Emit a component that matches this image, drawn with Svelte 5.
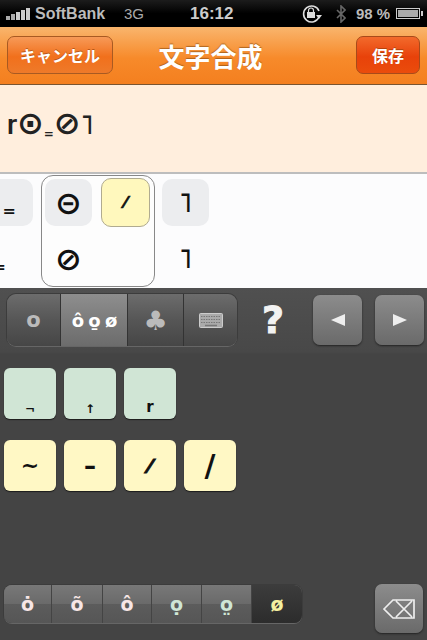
<script lang="ts">
  const bars = [4, 6, 8, 10, 12];
  const tabs = [
    { label: 'o', w: 54, size: 21 },
    { label: 'ô o̱ ø', w: 67, size: 18, active: true },
    { label: '♣', w: 56, size: 27 },
  ];
  const greenKeys = [
    { label: '¬', size: 12 },
    { label: '↑', size: 12 },
    { label: 'r', size: 15 },
  ];
  const yellowKeys = [
    { label: '~', size: 22 },
    { label: '–', size: 24 },
    { label: '⁄', size: 20, slant: true },
    { label: '/', size: 30 },
  ];
  const faces = [
    { label: 'ȯ', w: 48, c: 'pink' },
    { label: 'õ', w: 51, c: 'pink' },
    { label: 'ô', w: 49, c: 'pink' },
    { label: 'ọ', w: 50, c: 'mint' },
    { label: 'o̤', w: 50, c: 'mint' },
    { label: 'ø', w: 50, c: 'lemon', active: true },
  ];
</script>

<div class="screen">
  <div class="status">
    <div class="signal">
      {#each bars as h, i}
        <i class:dim={i < 2} style="height: {h}px"></i>
      {/each}
    </div>
    <span class="carrier">SoftBank</span>
    <span class="net">3G</span>
    <span class="clock">16:12</span>
    <svg class="lock" width="22" height="20" viewBox="0 0 22 20">
      <path d="M18 13a8 8 0 1 1 0-6" fill="none" stroke="#ddd" stroke-width="1.6" />
      <path d="M15 11h6l-3 4z" fill="#ddd" />
      <rect x="6" y="8" width="8" height="6" fill="#ddd" />
      <path d="M7.5 8V6.5a2.5 2.5 0 0 1 5 0V8" fill="none" stroke="#ddd" stroke-width="1.2" />
    </svg>
    <svg class="bt" width="10" height="18" viewBox="0 0 10 18">
      <path d="M1 5l8 8-4 4V1l4 4-8 8" fill="none" stroke="#666" stroke-width="1.6" />
    </svg>
    <span class="pct">98 %</span>
    <div class="battery"><b></b></div>
  </div>

  <div class="nav">
    <button class="btn cancel">キャンセル</button>
    <span class="title">文字合成</span>
    <button class="btn save">保存</button>
  </div>

  <div class="preview">
    <p><span class="p-r">ɼ</span><span class="p-o">⊙</span><span class="p-m">=</span><span class="p-o">⊘</span><span class="p-e">˥</span></p>
  </div>

  <div class="cands">
    <div class="col edge">
      <div class="cell gray low">=</div>
      <div class="cell low clipped">=</div>
    </div>
    <div class="popover">
      <div class="cell gray">⊝</div>
      <div class="cell picked">⁄</div>
      <div class="cell">⊘</div>
      <div class="cell"></div>
    </div>
    <div class="col">
      <div class="cell gray one">˥</div>
      <div class="cell one">˥</div>
    </div>
  </div>

  <div class="panel">
    <div class="toolbar">
      <div class="seg">
        {#each tabs as t}
          <div class="tab" class:active={t.active} style="width: {t.w}px; font-size: {t.size}px">{t.label}</div>
        {/each}
        <div class="tab" style="width: 53px">
          <svg width="24" height="15" viewBox="0 0 24 15">
            <rect x="0.5" y="0.5" width="23" height="14" rx="1" fill="#aaa" stroke="#ccc" />
            <path d="M2 3.5h20M2 6.5h20M2 9.5h20" stroke="#777" stroke-dasharray="1.5 1" />
            <path d="M6 12.5h12" stroke="#777" stroke-width="1.5" />
          </svg>
        </div>
      </div>
      <span class="help">?</span>
      <button class="square">
        <svg width="14" height="12" viewBox="0 0 14 12"><path d="M0 6l14-6v12z" fill="#eee" /></svg>
      </button>
      <button class="square next">
        <svg width="14" height="12" viewBox="0 0 14 12"><path d="M14 6L0 0v12z" fill="#eee" /></svg>
      </button>
    </div>

    <div class="keys">
      {#each greenKeys as k}
        <div class="key green" style="font-size: {k.size}px">{k.label}</div>
      {/each}
    </div>
    <div class="keys second">
      {#each yellowKeys as k}
        <div class="key yellow" class:slant={k.slant} style="font-size: {k.size}px">{k.label}</div>
      {/each}
    </div>

    <div class="bottom">
      <div class="seg faces">
        {#each faces as f}
          <div class="face {f.c}" class:active={f.active} style="width: {f.w}px">{f.label}</div>
        {/each}
      </div>
      <button class="square back">
        <svg width="32" height="20" viewBox="0 0 32 20">
          <path d="M1 10L10 1h21v18H10zM13 2l16 16M29 2L13 18" fill="none" stroke="#eee" stroke-width="1.7" />
        </svg>
      </button>
    </div>
  </div>
</div>

<style>
  :global(body) { margin: 0; background: #444; }

  .screen {
    width: 427px;
    height: 640px;
    display: flex;
    flex-direction: column;
    overflow: hidden;
    font-family: "Liberation Sans", "Noto Sans CJK JP", sans-serif;
  }

  .status {
    height: 27px;
    flex-shrink: 0;
    display: flex;
    align-items: center;
    padding-left: 6px;
    background: linear-gradient(#1c1c1c, #000 50%);
    box-sizing: border-box;
  }
  .signal { display: flex; align-items: flex-end; gap: 1px; width: 24px; height: 13px; }
  .signal i { width: 4px; background: #ccc; display: block; }
  .signal i.dim { background: #aaa; }
  .carrier { margin-left: 5px; font-size: 16px; font-weight: bold; width: 75px; color: #bbb; }
  .net { margin-left: 14px; font-size: 15px; width: 21px; color: #aaa; }
  .clock { margin-left: 45px; font-size: 17px; font-weight: bold; width: 46px; color: #ccc; }
  .lock { margin-left: 65px; }
  .bt { margin-left: 13px; }
  .pct { margin-left: 10px; font-size: 15px; font-weight: bold; width: 40px; color: #bbb; white-space: nowrap; }
  .battery {
    width: 24px;
    height: 11px;
    border: 1px solid #ccc;
    padding: 1px;
    box-sizing: border-box;
    position: relative;
  }
  .battery b { display: block; width: 100%; height: 100%; background: #aaa; }
  .battery::after {
    content: '';
    position: absolute;
    right: -4px;
    top: 2px;
    width: 2px;
    height: 5px;
    background: #ccc;
  }

  .nav {
    height: 58px;
    flex-shrink: 0;
    display: grid;
    grid-template-columns: 1fr auto 1fr;
    align-items: start;
    padding: 9px 7px 0;
    box-sizing: border-box;
    background: linear-gradient(#f9b56d, #f78a2a 55%, #f47f1f);
    border-bottom: 1px solid #7a5430;
  }
  .btn {
    height: 38px;
    border-radius: 7px;
    border: 1px solid #a85a22;
    color: #fff;
    font-family: inherit;
    font-size: 16px;
    font-weight: bold;
    padding: 0;
    text-shadow: 0 -1px 0 rgba(120, 50, 0, 0.5);
  }
  .cancel { width: 106px; background: linear-gradient(#f79a58, #f1701c 55%, #ee7a2a); }
  .save { width: 64px; justify-self: end; background: linear-gradient(#f26a2c, #e8420a 55%, #ea4c0c); border-color: #a84a1a; }
  .title {
    font-size: 26px;
    font-weight: bold;
    color: #fff;
    margin-top: 1px;
    margin-right: 6px;
    text-shadow: 0 -1px 1px rgba(130, 70, 10, 0.6);
  }

  .preview {
    height: 77px;
    flex-shrink: 0;
    background: #ffeedd;
    border-bottom: 2px solid #bdbdbd;
    display: flex;
    align-items: center;
    padding: 0 0 10px 7px;
    font-family: "DejaVu Sans", sans-serif;
    font-weight: bold;
    color: #222;
  }
  .preview p { margin: 0; white-space: nowrap; line-height: 1; }
  .p-r { font-size: 20px; vertical-align: 4px; }
  .p-o { font-size: 32px; }
  .p-m { font-size: 12px; vertical-align: -4px; }
  .p-e { font-size: 26px; }

  .cands {
    height: 114px;
    flex-shrink: 0;
    background: #fcfcfd;
    display: flex;
    align-items: flex-start;
    padding-top: 1px;
    box-sizing: border-box;
    font-family: "DejaVu Sans", sans-serif;
    font-weight: bold;
    color: #111;
  }
  .col { display: grid; grid-template-rows: 47px 47px; row-gap: 9px; padding-top: 4px; width: 47px; margin-left: 7px; }
  .col.edge { margin-left: -14px; }
  .cell {
    width: 47px;
    height: 47px;
    border-radius: 10px;
    display: flex;
    align-items: center;
    justify-content: center;
    font-size: 32px;
  }
  .cell.low { align-items: flex-end; justify-content: flex-end; padding: 0 17px 6px 0; box-sizing: border-box; font-size: 16px; }
  .cell.low.clipped { padding-right: 27px; }
  .cell.one { font-size: 26px; }
  .gray { background: #ecedef; }
  .picked {
    width: 49px;
    height: 49px;
    margin: -1px 0 0 -1px;
    background: #fff8bd;
    border: 1px solid #b0ab90;
    box-sizing: border-box;
    font-size: 16px;
    -webkit-text-stroke: 0.7px #111;
  }
  .popover {
    width: 114px;
    height: 112px;
    margin-left: 8px;
    box-sizing: border-box;
    border: 1px solid #888;
    border-radius: 12px;
    background: #fdfdfd;
    padding: 3px;
    display: grid;
    grid-template-columns: 47px 47px;
    grid-template-rows: 47px 47px;
    column-gap: 10px;
    row-gap: 9px;
  }

  .panel {
    flex: 1;
    display: flex;
    flex-direction: column;
    background: linear-gradient(#505050, #484848 64px, #444 66px);
  }
  .toolbar {
    display: flex;
    align-items: center;
    height: 52px;
    margin-top: 6px;
    padding-left: 7px;
  }
  .seg {
    display: flex;
    border-radius: 9px;
    overflow: hidden;
    box-shadow: 0 1px 0 #666, 0 0 0 1px #3c3c3c;
    height: 52px;
    background: linear-gradient(#6c6c6c, #565656 50%, #464646);
  }
  .tab {
    box-sizing: border-box;
    display: flex;
    align-items: center;
    justify-content: center;
    color: #bbb;
    font-family: "DejaVu Sans", sans-serif;
    font-weight: bold;
    border-right: 1px solid #333;
    white-space: nowrap;
  }
  .tab:last-child { border-right: 0; }
  .tab.active {
    background: linear-gradient(#8e8e8e, #7c7c7c 50%, #6c6c6c);
    color: #fff;
    letter-spacing: -1px;
  }
  .help {
    width: 72px;
    text-align: center;
    font-size: 38px;
    font-weight: bold;
    color: #f2f2f2;
    -webkit-text-stroke: 1px #f2f2f2;
    font-family: "DejaVu Sans", sans-serif;
  }
  .square {
    width: 49px;
    height: 50px;
    padding: 0;
    border: 0;
    border-radius: 7px;
    background: linear-gradient(#8c8c8c, #6a6a6a);
    box-shadow: 0 1px 2px #222;
    display: flex;
    align-items: center;
    justify-content: center;
    margin-left: 4px;
  }
  .next { margin-left: 13px; }

  .keys { display: flex; gap: 8px; padding-left: 4px; margin-top: 22px; }
  .second { margin-top: 21px; }
  .key {
    width: 52px;
    height: 51px;
    border-radius: 6px;
    box-shadow: 0 1px 1px #1c1c1c;
    display: flex;
    align-items: center;
    justify-content: center;
    font-family: "DejaVu Sans", sans-serif;
    font-weight: bold;
    color: #111;
  }
  .green { background: #d0e5d5; align-items: flex-end; padding-bottom: 3px; box-sizing: border-box; }
  .yellow { background: #fff8c5; }
  .slant { -webkit-text-stroke: 1px #111; }

  .bottom {
    margin-top: auto;
    display: flex;
    align-items: flex-start;
    justify-content: space-between;
    padding: 0 4px 7px;
  }
  .faces { height: 38px; width: 298px; margin-top: 1px; border-radius: 8px; }
  .face {
    box-sizing: border-box;
    display: flex;
    align-items: center;
    justify-content: center;
    font-family: "DejaVu Sans", sans-serif;
    font-weight: bold;
    font-size: 19px;
    border-right: 1px solid #444;
    background: linear-gradient(#787878, #6a6a6a 50%, #5c5c5c 50%, #565656);
  }
  .face:last-child { border-right: 0; }
  .pink { color: #f7e6e6; }
  .mint { color: #cfe6d6; }
  .lemon { color: #f4f0a0; }
  .face.active { background: linear-gradient(#3c3c3c, #2c2c2c); }
  .back { width: 48px; height: 49px; margin-left: 0; }
</style>
